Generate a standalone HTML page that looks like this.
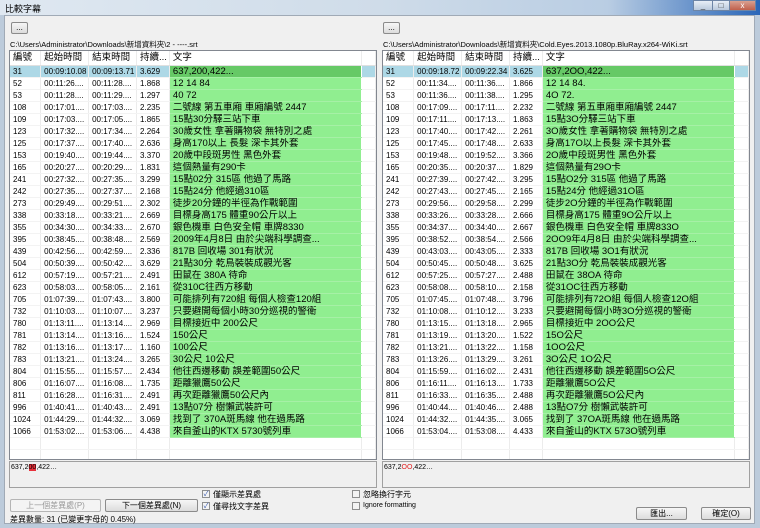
<!DOCTYPE html>
<html><head><meta charset="utf-8">
<style>
*{margin:0;padding:0;box-sizing:border-box}
body{width:760px;height:528px;overflow:hidden;background:#bccbdb;font-family:"Liberation Sans","Noto Sans CJK TC",sans-serif;position:relative}
.title{position:absolute;left:0;top:0;width:760px;height:15px;background:linear-gradient(90deg,#dfe8f1,#cfdce9 50%,#b9cde3 80%,#2a66b8 100%)}
.title span{position:absolute;left:5px;top:2px;font-size:9px;color:#000}
.tb{position:absolute;top:0;height:11px;border:1px solid #6d85a6;background:linear-gradient(#e8eef6,#b9c9dc);font-size:8px;text-align:center;line-height:9px;color:#333}
.client{position:absolute;left:4px;top:15px;width:751px;height:509px;background:#f0f0f0;border:1px solid #a0aab6}
.btn{position:absolute;border:1px solid #8b8b8b;border-radius:2px;background:linear-gradient(#f6f6f6,#dcdcdc);font-size:8px;text-align:center;color:#000}
.path{position:absolute;font-size:7.5px;color:#000;white-space:nowrap}
.tbl{position:absolute;top:50px;width:368px;height:410px;border:1px solid #828790;background:#fff;overflow:hidden}
table{border-collapse:collapse;table-layout:fixed;font-size:8px}
td,th{height:12px;border-right:1px solid #ececec;border-bottom:1px solid #f3f3f3;white-space:nowrap;overflow:hidden;padding-left:3px;text-align:left;font-weight:normal;line-height:11px}
th{height:14px;font-size:9.5px;border-bottom:1px solid #e0e0e0;background:#fff;line-height:13px}
td.t{background:#90ee90;font-size:9.5px;border-bottom:1px solid #a6f0a6;border-right:1px solid #fff}
tr.sel td{background:#add8e6}
tr.sel td.t{background:#66c966}
.prev{position:absolute;top:461px;width:368px;height:27px;border:1px solid #a0a0a0;background:#f0f0f0;font-size:7px;padding:2px 1px}
.cb{position:absolute;width:8px;height:8px;border:1px solid #8e8f8f;background:#f4f4f4;font-size:7px;line-height:7px;color:#2b4fa8;text-align:center}
.lbl{position:absolute;font-size:8px;color:#000;white-space:nowrap}
</style></head><body>
<div class="title"><span>比較字幕</span></div>
<div class="tb" style="left:693px;width:20px">_</div>
<div class="tb" style="left:712px;width:18px">□</div>
<div class="tb" style="left:729px;width:27px;background:linear-gradient(#d9a090,#c0604c);color:#fff">x</div>
<div class="client"></div>

<div class="btn" style="left:11px;top:22px;width:17px;height:12px;line-height:9px">...</div>
<div class="path" style="left:10px;top:39px">C:\Users\Administrator\Downloads\新增資料夾\2 - ----.srt</div>
<div class="btn" style="left:383px;top:22px;width:17px;height:12px;line-height:9px">...</div>
<div class="path" style="left:383px;top:39px">C:\Users\Administrator\Downloads\新增資料夾\Cold.Eyes.2013.1080p.BluRay.x264-WiKi.srt</div>

<div class="tbl" style="left:9px">
<table><colgroup><col style="width:31px"><col style="width:48px"><col style="width:48px"><col style="width:33px"><col style="width:194px"><col style="width:14px"></colgroup>
<tr><th>編號</th><th>起始時間</th><th>結束時間</th><th>持續...</th><th>文字</th><th></th></tr>
<tr class="sel"><td>31</td><td>00:09:10.08</td><td>00:09:13.71</td><td>3.629</td><td class="t">637,200,422...</td><td></td></tr>
<tr><td>52</td><td>00:11:26....</td><td>00:11:28....</td><td>1.868</td><td class="t">12 14 84</td><td></td></tr>
<tr><td>53</td><td>00:11:28....</td><td>00:11:29....</td><td>1.297</td><td class="t">40 72</td><td></td></tr>
<tr><td>108</td><td>00:17:01....</td><td>00:17:03....</td><td>2.235</td><td class="t">二號線 第五車廂 車廂編號 2447</td><td></td></tr>
<tr><td>109</td><td>00:17:03....</td><td>00:17:05....</td><td>1.865</td><td class="t">15點30分驛三站下車</td><td></td></tr>
<tr><td>123</td><td>00:17:32....</td><td>00:17:34....</td><td>2.264</td><td class="t">30歲女性 拿著購物袋 無特別之處</td><td></td></tr>
<tr><td>125</td><td>00:17:37....</td><td>00:17:40....</td><td>2.636</td><td class="t">身高170以上 長髮 深卡其外套</td><td></td></tr>
<tr><td>153</td><td>00:19:40....</td><td>00:19:44....</td><td>3.370</td><td class="t">20歲中段斑男性 黑色外套</td><td></td></tr>
<tr><td>165</td><td>00:20:27....</td><td>00:20:29....</td><td>1.831</td><td class="t">這個熱量有290卡</td><td></td></tr>
<tr><td>241</td><td>00:27:32....</td><td>00:27:35....</td><td>3.299</td><td class="t">15點02分 315區 他過了馬路</td><td></td></tr>
<tr><td>242</td><td>00:27:35....</td><td>00:27:37....</td><td>2.168</td><td class="t">15點24分 他經過310區</td><td></td></tr>
<tr><td>273</td><td>00:29:49....</td><td>00:29:51....</td><td>2.302</td><td class="t">徒步20分鐘的半徑為作戰範圍</td><td></td></tr>
<tr><td>338</td><td>00:33:18....</td><td>00:33:21....</td><td>2.669</td><td class="t">目標身高175 體重90公斤以上</td><td></td></tr>
<tr><td>355</td><td>00:34:30....</td><td>00:34:33....</td><td>2.670</td><td class="t">銀色機車 白色安全帽 車牌8330</td><td></td></tr>
<tr><td>395</td><td>00:38:45....</td><td>00:38:48....</td><td>2.569</td><td class="t">2009年4月8日 由於尖端科學調查...</td><td></td></tr>
<tr><td>439</td><td>00:42:56....</td><td>00:42:59....</td><td>2.336</td><td class="t">817B 回收場 301有狀況</td><td></td></tr>
<tr><td>504</td><td>00:50:39....</td><td>00:50:42....</td><td>3.629</td><td class="t">21點30分 乾鳥裝裝成觀光客</td><td></td></tr>
<tr><td>612</td><td>00:57:19....</td><td>00:57:21....</td><td>2.491</td><td class="t">田鼠在 380A 待命</td><td></td></tr>
<tr><td>623</td><td>00:58:03....</td><td>00:58:05....</td><td>2.161</td><td class="t">從310C往西方移動</td><td></td></tr>
<tr><td>705</td><td>01:07:39....</td><td>01:07:43....</td><td>3.800</td><td class="t">可能排列有720組 每個人檢查120組</td><td></td></tr>
<tr><td>732</td><td>01:10:03....</td><td>01:10:07....</td><td>3.237</td><td class="t">只要避開每個小時30分巡視的警衛</td><td></td></tr>
<tr><td>780</td><td>01:13:11....</td><td>01:13:14....</td><td>2.969</td><td class="t">目標接近中 200公尺</td><td></td></tr>
<tr><td>781</td><td>01:13:14....</td><td>01:13:16....</td><td>1.524</td><td class="t">150公尺</td><td></td></tr>
<tr><td>782</td><td>01:13:16....</td><td>01:13:17....</td><td>1.160</td><td class="t">100公尺</td><td></td></tr>
<tr><td>783</td><td>01:13:21....</td><td>01:13:24....</td><td>3.265</td><td class="t">30公尺 10公尺</td><td></td></tr>
<tr><td>804</td><td>01:15:55....</td><td>01:15:57....</td><td>2.434</td><td class="t">他往西邊移動 誤差範圍50公尺</td><td></td></tr>
<tr><td>806</td><td>01:16:07....</td><td>01:16:08....</td><td>1.735</td><td class="t">距離獵鷹50公尺</td><td></td></tr>
<tr><td>811</td><td>01:16:28....</td><td>01:16:31....</td><td>2.491</td><td class="t">再次距離獵鷹50公尺內</td><td></td></tr>
<tr><td>996</td><td>01:40:41....</td><td>01:40:43....</td><td>2.491</td><td class="t">13點07分 樹懶武裝許可</td><td></td></tr>
<tr><td>1024</td><td>01:44:29....</td><td>01:44:32....</td><td>3.069</td><td class="t">找到了 370A斑馬線 他在過馬路</td><td></td></tr>
<tr><td>1066</td><td>01:53:02....</td><td>01:53:06....</td><td>4.438</td><td class="t">來自釜山的KTX 5730號列車</td><td></td></tr>
<tr><td></td><td></td><td></td><td></td><td></td><td></td></tr>
<tr><td></td><td></td><td></td><td></td><td></td><td></td></tr>
</table></div>

<div class="tbl" style="left:382px">
<table><colgroup><col style="width:31px"><col style="width:48px"><col style="width:48px"><col style="width:33px"><col style="width:194px"><col style="width:14px"></colgroup>
<tr><th>編號</th><th>起始時間</th><th>結束時間</th><th>持續...</th><th>文字</th><th></th></tr>
<tr class="sel"><td>31</td><td>00:09:18.72</td><td>00:09:22.34</td><td>3.625</td><td class="t">637,2OO,422...</td><td></td></tr>
<tr><td>52</td><td>00:11:34....</td><td>00:11:36....</td><td>1.866</td><td class="t">12 14 84.</td><td></td></tr>
<tr><td>53</td><td>00:11:36....</td><td>00:11:38....</td><td>1.295</td><td class="t">4O 72.</td><td></td></tr>
<tr><td>108</td><td>00:17:09....</td><td>00:17:11....</td><td>2.232</td><td class="t">二號線 第五車廂車廂編號 2447</td><td></td></tr>
<tr><td>109</td><td>00:17:11....</td><td>00:17:13....</td><td>1.863</td><td class="t">15點3O分驛三站下車</td><td></td></tr>
<tr><td>123</td><td>00:17:40....</td><td>00:17:42....</td><td>2.261</td><td class="t">3O歲女性 拿著購物袋 無特別之處</td><td></td></tr>
<tr><td>125</td><td>00:17:45....</td><td>00:17:48....</td><td>2.633</td><td class="t">身高17O以上長髮 深卡其外套</td><td></td></tr>
<tr><td>153</td><td>00:19:48....</td><td>00:19:52....</td><td>3.366</td><td class="t">2O歲中段斑男性 黑色外套</td><td></td></tr>
<tr><td>165</td><td>00:20:35....</td><td>00:20:37....</td><td>1.829</td><td class="t">這個熱量有29O卡</td><td></td></tr>
<tr><td>241</td><td>00:27:39....</td><td>00:27:42....</td><td>3.295</td><td class="t">15點O2分 315區 他過了馬路</td><td></td></tr>
<tr><td>242</td><td>00:27:43....</td><td>00:27:45....</td><td>2.165</td><td class="t">15點24分 他經過31O區</td><td></td></tr>
<tr><td>273</td><td>00:29:56....</td><td>00:29:58....</td><td>2.299</td><td class="t">徒步2O分鐘的半徑為作戰範圍</td><td></td></tr>
<tr><td>338</td><td>00:33:26....</td><td>00:33:28....</td><td>2.666</td><td class="t">目標身高175 體重9O公斤以上</td><td></td></tr>
<tr><td>355</td><td>00:34:37....</td><td>00:34:40....</td><td>2.667</td><td class="t">銀色機車 白色安全帽 車牌833O</td><td></td></tr>
<tr><td>395</td><td>00:38:52....</td><td>00:38:54....</td><td>2.566</td><td class="t">2OO9年4月8日 由於尖端科學調查...</td><td></td></tr>
<tr><td>439</td><td>00:43:03....</td><td>00:43:05....</td><td>2.333</td><td class="t">817B 回收場 3O1有狀況</td><td></td></tr>
<tr><td>504</td><td>00:50:45....</td><td>00:50:48....</td><td>3.625</td><td class="t">21點3O分 乾鳥裝裝成觀光客</td><td></td></tr>
<tr><td>612</td><td>00:57:25....</td><td>00:57:27....</td><td>2.488</td><td class="t">田鼠在 38OA 待命</td><td></td></tr>
<tr><td>623</td><td>00:58:08....</td><td>00:58:10....</td><td>2.158</td><td class="t">從31OC往西方移動</td><td></td></tr>
<tr><td>705</td><td>01:07:45....</td><td>01:07:48....</td><td>3.796</td><td class="t">可能排列有72O組 每個人檢查12O組</td><td></td></tr>
<tr><td>732</td><td>01:10:08....</td><td>01:10:12....</td><td>3.233</td><td class="t">只要避開每個小時3O分巡視的警衛</td><td></td></tr>
<tr><td>780</td><td>01:13:15....</td><td>01:13:18....</td><td>2.965</td><td class="t">目標接近中 2OO公尺</td><td></td></tr>
<tr><td>781</td><td>01:13:19....</td><td>01:13:20....</td><td>1.522</td><td class="t">15O公尺</td><td></td></tr>
<tr><td>782</td><td>01:13:21....</td><td>01:13:22....</td><td>1.158</td><td class="t">1OO公尺</td><td></td></tr>
<tr><td>783</td><td>01:13:26....</td><td>01:13:29....</td><td>3.261</td><td class="t">3O公尺 1O公尺</td><td></td></tr>
<tr><td>804</td><td>01:15:59....</td><td>01:16:02....</td><td>2.431</td><td class="t">他往西邊移動 誤差範圍5O公尺</td><td></td></tr>
<tr><td>806</td><td>01:16:11....</td><td>01:16:13....</td><td>1.733</td><td class="t">距離獵鷹5O公尺</td><td></td></tr>
<tr><td>811</td><td>01:16:33....</td><td>01:16:35....</td><td>2.488</td><td class="t">再次距離獵鷹5O公尺內</td><td></td></tr>
<tr><td>996</td><td>01:40:44....</td><td>01:40:46....</td><td>2.488</td><td class="t">13點O7分 樹懶武裝許可</td><td></td></tr>
<tr><td>1024</td><td>01:44:32....</td><td>01:44:35....</td><td>3.065</td><td class="t">找到了 37OA斑馬線 他在過馬路</td><td></td></tr>
<tr><td>1066</td><td>01:53:04....</td><td>01:53:08....</td><td>4.433</td><td class="t">來自釜山的KTX 573O號列車</td><td></td></tr>
<tr><td></td><td></td><td></td><td></td><td></td><td></td></tr>
<tr><td></td><td></td><td></td><td></td><td></td><td></td></tr>
</table></div>

<div class="prev" style="left:9px">637,2<span style="background:#e8303a">00</span>,422…</div>
<div class="prev" style="left:382px">637,2<span style="color:#e02020">OO</span>,422…</div>

<div class="btn" style="left:10px;top:499px;width:91px;height:13px;line-height:11px;color:#999;border-color:#b5b5b5;background:#f4f4f4">上一個差異處(P)</div>
<div class="btn" style="left:105px;top:499px;width:93px;height:13px;line-height:11px">下一個差異處(N)</div>
<div class="cb" style="left:202px;top:490px">✓</div><div class="lbl" style="left:213px;top:489px">僅顯示差異處</div>
<div class="cb" style="left:202px;top:502px">✓</div><div class="lbl" style="left:213px;top:501px">僅尋找文字差異</div>
<div class="cb" style="left:352px;top:490px"></div><div class="lbl" style="left:363px;top:489px">忽略換行字元</div>
<div class="cb" style="left:352px;top:502px"></div><div class="lbl" style="left:363px;top:502px;font-size:7px">Ignore formatting</div>
<div class="lbl" style="left:10px;top:514px">差異數量: 31 (已變更字母的 0.45%)</div>
<div class="btn" style="left:636px;top:507px;width:51px;height:13px;line-height:11px">匯出...</div>
<div class="btn" style="left:701px;top:507px;width:50px;height:13px;line-height:11px">確定(O)</div>
</body></html>
